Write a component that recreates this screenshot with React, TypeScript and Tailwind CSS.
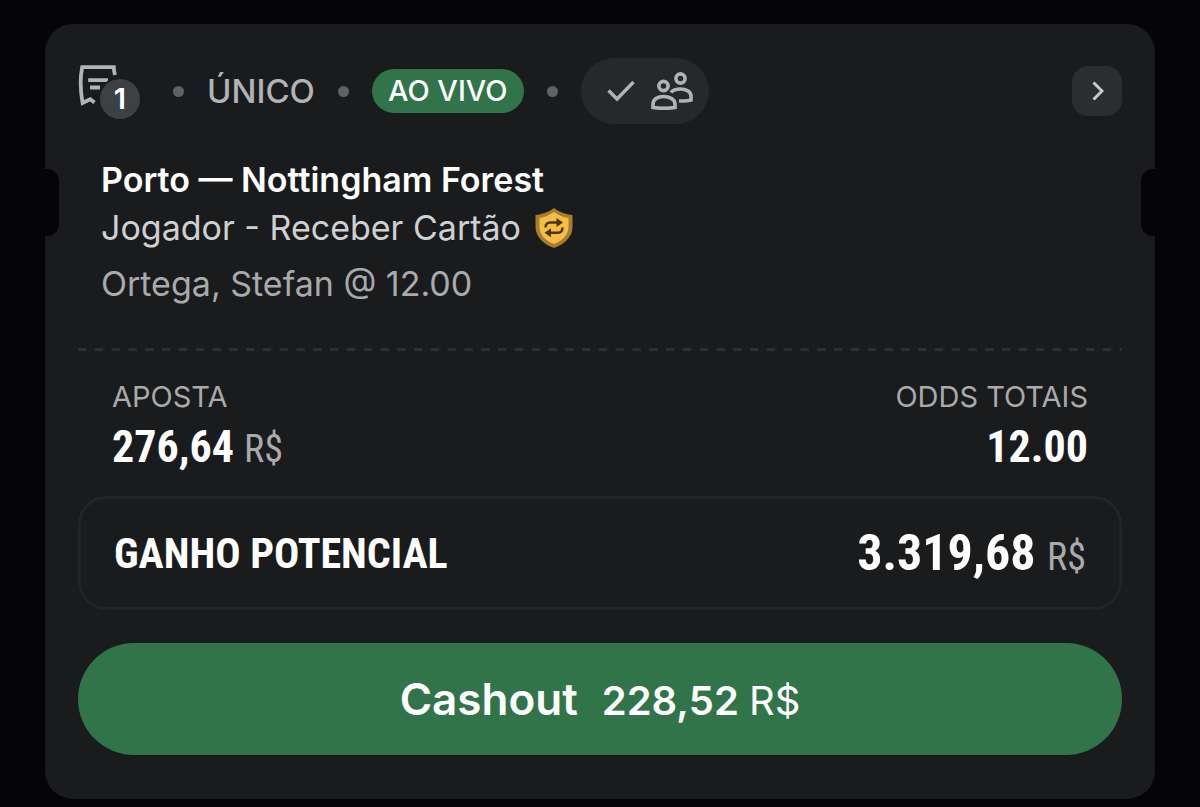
import React from 'react';

const condensed = "font-['Roboto_Condensed','Liberation_Sans_Narrow',Roboto,sans-serif]";

const Dot: React.FC = () => <span className="h-[11px] w-[11px] shrink-0 rounded-full bg-[#5b6364]" />;

const SlipIcon: React.FC = () => (
  <svg width="40" height="44" viewBox="0 0 40 44" fill="none" stroke="#b2b3b5" strokeWidth="3.800">
    <path d="M37 12C36.200 9 35.800 6.500 35.800 4.200H4.200C2 15 2.200 27 4.600 40L12.200 36.200L16.500 39.500" />
    <path d="M10.200 17.200H30M12 24.500H22" />
  </svg>
);

const PeopleIcon: React.FC = () => (
  <svg width="42" height="38" viewBox="0 0 42 38" fill="none" stroke="#b2b3b5" strokeWidth="3.600">
    <circle cx="12.500" cy="14" r="4.600" />
    <circle cx="29.500" cy="6.500" r="4.600" />
    <path d="M2 35.500V32C2 27.500 6.500 24.500 12.500 24.500S24 27.500 24 32V35.500C17 36.500 9 36.500 2 35.500Z" />
    <path d="M20 20.500C22 18 25.500 17 29.500 17C35.500 17 40 20 40 24V28C36 29 32 29.200 28 28.800" />
  </svg>
);

const ShieldIcon: React.FC = () => (
  <svg width="38" height="40" viewBox="0 0 38 40">
    <path d="M19 0C24 4 31 6.500 37.500 7V19C37.500 29 29 36.500 19 40C9 36.500 .5 29 .5 19V7C7 6.500 14 4 19 0Z" fill="#a67c2d" />
    <path d="M19 4C24 7.500 29 9.500 33.500 10V19C33.500 27 27 33 19 36C11 33 4.500 27 4.500 19V10C9 9.500 14 7.500 19 4Z" fill="#f4bd45" />
    <g fill="none" stroke="#4a3512" strokeWidth="2.400">
      <path d="M10.500 19.500C10.500 16 12.500 14.500 15 14.500H23" />
      <path d="M27.500 19.500C27.500 23 25.500 24.800 23 24.800H14.500" />
    </g>
    <path d="M21.500 10L28 14.500L21.500 19ZM16 20.200L9.500 24.800L16 29.300Z" fill="#4a3512" />
  </svg>
);

const App: React.FC = () => {
  return (
    <main className="min-h-screen bg-[#050507] px-[45px] pt-6 pb-2 font-[Inter,sans-serif] text-white">
      <article className="relative rounded-[28px] bg-[#1a1b1d] px-[33px] pt-[34px] pb-11">
        <span className="absolute top-[145px] left-0 h-[67px] w-[14px] rounded-r-xl bg-[#050507]" />
        <span className="absolute top-[145px] right-0 h-[67px] w-[14px] rounded-l-xl bg-[#050507]" />

        <header className="flex h-[66px] items-center">
          <div className="relative mr-[33px] h-14 w-[62px]">
            <SlipIcon />
            <span className="absolute right-0 bottom-0 flex h-10 w-10 items-center justify-center rounded-full bg-[#3c4144] text-[29px] font-semibold ring-2 ring-[#1a1b1d]">
              1
            </span>
          </div>
          <Dot />
          <span className="mx-[23px] text-[33px] leading-10 font-medium text-[#b2b3b5]">ÚNICO</span>
          <Dot />
          <span className="mx-[23px] flex h-11 items-center rounded-full bg-[#32744a] px-4 text-[29px] font-medium">AO VIVO</span>
          <Dot />
          <span className="ml-[23px] flex h-[66px] items-center gap-4 rounded-full bg-[#25292b] pr-4 pl-[26px]">
            <svg width="28" height="22" viewBox="0 0 28 22" fill="none" stroke="#b2b3b5" strokeWidth="3.400">
              <path d="M1.500 10.500L10 19L26.500 2" />
            </svg>
            <PeopleIcon />
          </span>
          <button type="button" aria-label="Ver aposta" className="ml-auto flex h-[50px] w-[50px] items-center justify-center rounded-2xl bg-[#2a2e31]">
            <svg width="14" height="20" viewBox="0 0 14 20" fill="none" stroke="#c9cacc" strokeWidth="3">
              <path d="M3.500 1.500L12 10L3.500 18.500" />
            </svg>
          </button>
        </header>

        <section className="px-[23px] pt-8">
          <h2 className="text-[34px] leading-[48px] font-semibold">Porto — Nottingham Forest</h2>
          <p className="flex items-center gap-[14px] text-[34px] leading-[48px] text-[#cfd0d2]">
            Jogador - Receber Cartão
            <ShieldIcon />
          </p>
          <p className="pt-2 text-[34px] leading-[48px] text-[#a9aaac]">Ortega, Stefan @ 12.00</p>
        </section>

        <svg className="mt-10 block h-[3px] w-full">
          <line x1="0" y1="1.500" x2="100%" y2="1.500" stroke="#2d2f31" strokeWidth="3" strokeDasharray="8.400 8.400" />
        </svg>

        <dl className="flex justify-between px-[34px] pt-6">
          <div>
            <dt className="text-[29px] leading-[44px] text-[#a9aaac]">APOSTA</dt>
            <dd className={`${condensed} text-[44px] leading-[56px] font-bold`}>
              276,64 <span className="text-[38px] font-normal text-[#a9aaac]">R$</span>
            </dd>
          </div>
          <div className="text-right">
            <dt className="text-[29px] leading-[44px] text-[#a9aaac]">ODDS TOTAIS</dt>
            <dd className={`${condensed} text-[44px] leading-[56px] font-bold`}>12.00</dd>
          </div>
        </dl>

        <div className={`${condensed} mt-[19px] flex h-[114px] items-center justify-between rounded-[28px] border-[3px] border-[#222426] px-[33px] font-bold`}>
          <span className="text-[42px]">GANHO POTENCIAL</span>
          <span className="text-[50px]">
            3.319,68 <span className="text-[38px] font-normal text-[#a9aaac]">R$</span>
          </span>
        </div>

        <button type="button" className="mt-[33px] flex h-[112px] w-full items-center justify-center rounded-full bg-[#32744a]">
          <span className="flex items-baseline gap-6">
            <span className="text-[44px] font-semibold">Cashout</span>
            <span className="text-[40px] font-semibold">
              228,52 <span className="font-normal">R$</span>
            </span>
          </span>
        </button>
      </article>
    </main>
  );
};

export default App;
